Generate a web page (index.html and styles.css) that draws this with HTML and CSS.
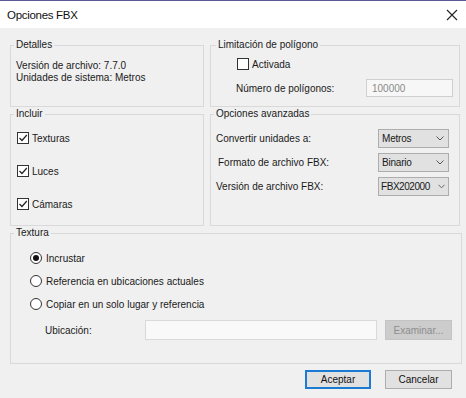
FILE: index.html
```html
<!DOCTYPE html>
<html>
    <head>
        <title>Opciones FBX</title>
        <link rel="stylesheet" href="styles.css">
    </head>
    <body>
        <div class="window">
            <div class="titlebar">
                <span class="caption">Opciones FBX</span>
                <svg class="close" width="12" height="12" viewBox="0 0 12 12">
                    <path d="M1 1 L11 11 M11 1 L1 11" stroke="#222" stroke-width="1.1" fill="none"/>
                </svg>
            </div>

            <div class="content">
                <div class="groups">
                    <fieldset class="group detalles">
                        <legend>Detalles</legend>
                        <div>Versión de archivo: 7.7.0</div>
                        <div>Unidades de sistema: Metros</div>
                    </fieldset>

                    <fieldset class="group limite">
                        <legend>Limitación de polígono</legend>
                        <label class="check">
                            <span class="box"></span>
                            <span>Activada</span>
                        </label>
                        <div class="field">
                            <span>Número de polígonos:</span>
                            <span class="input disabled">100000</span>
                        </div>
                    </fieldset>

                    <fieldset class="group incluir">
                        <legend>Incluir</legend>
                        <label class="check">
                            <span class="box"><svg width="10" height="10" viewBox="0 0 10 10"><path d="M1.5 5 L4 7.5 L8.8 2" stroke="#222" stroke-width="1.2" fill="none"/></svg></span>
                            <span>Texturas</span>
                        </label>
                        <label class="check">
                            <span class="box"><svg width="10" height="10" viewBox="0 0 10 10"><path d="M1.5 5 L4 7.5 L8.8 2" stroke="#222" stroke-width="1.2" fill="none"/></svg></span>
                            <span>Luces</span>
                        </label>
                        <label class="check">
                            <span class="box"><svg width="10" height="10" viewBox="0 0 10 10"><path d="M1.5 5 L4 7.5 L8.8 2" stroke="#222" stroke-width="1.2" fill="none"/></svg></span>
                            <span>Cámaras</span>
                        </label>
                    </fieldset>

                    <fieldset class="group avanzadas">
                        <legend>Opciones avanzadas</legend>
                        <div class="field">
                            <span>Convertir unidades a:</span>
                            <span class="combo">Metros<svg width="8" height="5" viewBox="0 0 8 5"><path d="M0.5 0.5 L4 4 L7.5 0.5" stroke="#555" fill="none"/></svg></span>
                        </div>
                        <div class="field">
                            <span class="shift">Formato de archivo FBX:</span>
                            <span class="combo">Binario<svg width="8" height="5" viewBox="0 0 8 5"><path d="M0.5 0.5 L4 4 L7.5 0.5" stroke="#555" fill="none"/></svg></span>
                        </div>
                        <div class="field">
                            <span>Versión de archivo FBX:</span>
                            <span class="combo tight">FBX202000<svg width="7" height="5" viewBox="0 0 8 5"><path d="M0.5 0.5 L4 4 L7.5 0.5" stroke="#555" fill="none"/></svg></span>
                        </div>
                    </fieldset>
                </div>

                <fieldset class="group textura">
                    <legend>Textura</legend>
                    <label class="radio">
                        <span class="circle on"></span>
                        <span>Incrustar</span>
                    </label>
                    <label class="radio">
                        <span class="circle"></span>
                        <span>Referencia en ubicaciones actuales</span>
                    </label>
                    <label class="radio">
                        <span class="circle"></span>
                        <span>Copiar en un solo lugar y referencia</span>
                    </label>
                    <div class="ubicacion">
                        <span class="label">Ubicación:</span>
                        <span class="input path"></span>
                        <button class="disabled-btn" type="button">Examinar...</button>
                    </div>
                </fieldset>

                <div class="actions">
                    <button class="default" type="button">Aceptar</button>
                    <button type="button">Cancelar</button>
                </div>
            </div>
        </div>
    </body>
</html>
```

FILE: styles.css
```css
body {
    margin: 0;
    background-color: #f0f0f0;
    color: #1a1a1a;
    font-family: "Liberation Sans", Arial, sans-serif;
    font-size: 10px;
}

.window {
    height: 398px;
    background-color: #f0f0f0;
    border-top: 1px solid #5a5a96;
    box-sizing: border-box;
}

.titlebar {
    height: 27px;
    background-color: white;
    display: flex;
    align-items: center;
    justify-content: space-between;
    padding: 0 8px 0 7px;
}

.caption {
    font-size: 11.5px;
    letter-spacing: -0.3px;
    color: #111;
}

.content {
    padding: 11px 0 0 10px;
}

.groups {
    display: grid;
    grid-template-columns: 194px 250px;
    grid-template-rows: 68px 118px;
    column-gap: 6px;
    row-gap: 1px;
}

.group {
    margin: 0;
    border: 1px solid #d9d9d9;
    box-sizing: border-box;
    min-width: 0;
}

.group legend {
    padding: 0 2px;
    margin-left: -2px;
    line-height: 12px;
}

.detalles {
    padding: 9px 5px 0;
    line-height: 12px;
}

.limite {
    padding: 7px 6px 0 25px;
}

.limite legend {
    margin-left: -20px;
}

.incluir {
    padding: 12px 6px 0;
    display: flex;
    flex-direction: column;
    gap: 21px;
}

.incluir legend {
    margin-left: -3px;
}

.avanzadas {
    padding: 9px 10px 0 5px;
    display: flex;
    flex-direction: column;
    gap: 5px;
}

.textura {
    margin-top: 1px;
    width: 452px;
    height: 137px;
    padding: 13px 9px 0 19px;
    display: flex;
    flex-direction: column;
    gap: 11px;
}

.textura legend {
    margin-left: -16px;
}

.check, .radio {
    display: flex;
    align-items: center;
    height: 12px;
    gap: 3px;
}

.limite .check {
    margin-left: 1px;
}

.box {
    width: 10px;
    height: 10px;
    border: 1px solid #333;
    background-color: white;
    display: flex;
    align-items: center;
    justify-content: center;
}

.circle {
    width: 10px;
    height: 10px;
    border: 1px solid #333;
    border-radius: 50%;
    background-color: white;
    display: flex;
    align-items: center;
    justify-content: center;
    margin-right: 1px;
}

.circle.on::after {
    content: "";
    width: 6px;
    height: 6px;
    border-radius: 50%;
    background-color: #111;
}

.field {
    display: flex;
    align-items: center;
    justify-content: space-between;
}

.limite .field {
    margin-top: 9px;
}

.shift {
    margin-left: 2px;
}

.input {
    box-sizing: border-box;
    height: 18px;
    border: 1px solid #cfcfcf;
    background-color: #f7f7f7;
    display: flex;
    align-items: center;
    padding-left: 5px;
}

.input.disabled {
    width: 87px;
    color: #8a8a8a;
}

.combo {
    box-sizing: border-box;
    width: 71px;
    height: 19px;
    border: 1px solid #adadad;
    background-color: #e1e1e1;
    display: flex;
    align-items: center;
    justify-content: space-between;
    padding: 0 4px 0 3px;
    letter-spacing: -0.2px;
}

.combo.tight {
    padding: 0 3px 0 2px;
    letter-spacing: -0.45px;
}

.ubicacion {
    display: flex;
    align-items: center;
    margin-top: -1px;
    height: 20px;
}

.ubicacion .label {
    width: 100px;
    padding-left: 15px;
}

.input.path {
    width: 232px;
    height: 20px;
    background-color: #f9f9f9;
    border-color: #d9d9d9;
}

button {
    box-sizing: border-box;
    width: 67px;
    height: 19px;
    border: 1px solid #adadad;
    background-color: #e1e1e1;
    color: #111;
    font-family: "Liberation Sans", Arial, sans-serif;
    font-size: 10px;
    padding: 0;
}

.disabled-btn {
    margin-left: 8px;
    height: 20px;
    border-color: #c4c4c4;
    background-color: #cccccc;
    color: #8d8d8d;
}

.default {
    width: 66px;
    border: 2px solid #1a7ad4;
}

.actions {
    display: flex;
    justify-content: flex-end;
    gap: 14px;
    padding: 6px 14px 0 0;
}
```
